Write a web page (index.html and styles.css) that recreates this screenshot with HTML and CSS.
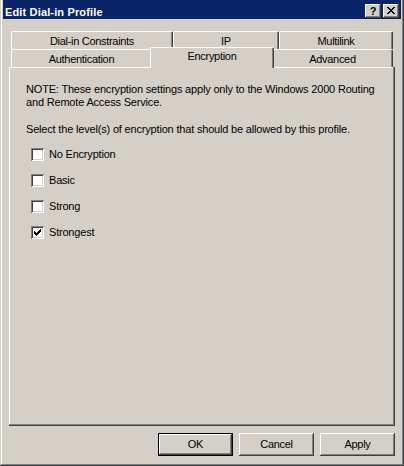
FILE: index.html
```html
<!DOCTYPE html>
<html>
<head>
<meta charset="utf-8">
<title>Edit Dial-in Profile</title>
<link rel="stylesheet" href="styles.css">
</head>
<body>
<div class="window">
  <div class="titlebar">
    <span class="title">Edit Dial-in Profile</span>
    <span class="cap-btn help">?</span>
    <span class="cap-btn close">
      <svg width="8" height="7" viewBox="0 0 8 7" shape-rendering="crispEdges">
        <path d="M0 0h2v1H0zM6 0h2v1H6zM1 1h2v1H1zM5 1h2v1H5zM2 2h4v1H2zM3 3h2v1H3zM2 4h4v1H2zM1 5h2v1H1zM5 5h2v1H5zM0 6h2v1H0zM6 6h2v1H6z" fill="#000"/>
      </svg>
    </span>
  </div>

  <div class="tabctl">
    <div class="tabrow">
      <div class="tab t-dial">Dial-in Constraints</div>
      <div class="tab t-ip">IP</div>
      <div class="tab t-multi">Multilink</div>
    </div>
    <div class="tabrow">
      <div class="tab t-auth">Authentication</div>
      <div class="tab t-enc selected">Encryption</div>
      <div class="tab t-adv">Advanced</div>
    </div>
    <div class="panel">
      <p class="note">NOTE: These encryption settings apply only to the Windows 2000 Routing<br>and Remote Access Service.</p>
      <p class="select">Select the level(s) of encryption that should be allowed by this profile.</p>
      <div class="checks">
        <label class="check"><span class="box"></span><span class="lbl">No Encryption</span></label>
        <label class="check"><span class="box"></span><span class="lbl">Basic</span></label>
        <label class="check"><span class="box"></span><span class="lbl">Strong</span></label>
        <label class="check"><span class="box"><svg width="7" height="7" viewBox="0 0 7 7" shape-rendering="crispEdges"><path d="M6 0h1v1H6zM5 1h2v1H5zM0 2h1v1H0zM4 2h3v1H4zM0 3h2v1H0zM3 3h3v1H3zM0 4h5v1H0zM1 5h3v1H1zM2 6h1v1H2z" fill="#000"/></svg></span><span class="lbl">Strongest</span></label>
      </div>
    </div>
  </div>

  <div class="buttons">
    <div class="btn default">OK</div>
    <div class="btn">Cancel</div>
    <div class="btn">Apply</div>
  </div>
</div>
</body>
</html>
```

FILE: styles.css
```css
* { box-sizing: border-box; }

html, body {
  margin: 0;
  padding: 0;
  background: #d4d0c8;
}

body {
  width: 404px;
  height: 466px;
  overflow: hidden;
  font-family: "Liberation Sans", Arial, sans-serif;
  font-size: 11px;
  color: #000;
}

.window {
  width: 404px;
  height: 466px;
  padding: 0 3px 3px 3px;
  background: #d4d0c8;
  box-shadow:
    inset -1px -1px 0 #404040,
    inset 1px 0 0 #d4d0c8,
    inset -2px -2px 0 #808080,
    inset 2px 0 0 #ffffff;
}

/* Title bar */
.titlebar {
  height: 19px;
  background: #0a246a;
  display: flex;
  align-items: flex-start;
  padding: 4px 2px 0 2px;
}

.title {
  flex: 1;
  margin-top: 2px;
  color: #fff;
  font-weight: bold;
  font-size: 11px;
  line-height: 13px;
  letter-spacing: 0.15px;
  white-space: nowrap;
}

.cap-btn {
  width: 16px;
  height: 14px;
  background: #d4d0c8;
  box-shadow:
    inset -1px -1px 0 #404040,
    inset 1px 1px 0 #ffffff,
    inset -2px -2px 0 #808080;
  display: flex;
  align-items: center;
  justify-content: center;
}

.help {
  margin-right: 2px;
  font-weight: bold;
  font-size: 11px;
  line-height: 14px;
  padding-bottom: 1px;
}

.close svg {
  display: block;
  margin-top: -1px;
}

/* Tab control */
.tabctl {
  margin: 12px 6px 0 6px;
}

.tabrow {
  display: flex;
  height: 18px;
  padding: 0 2px;
}

.tab {
  height: 18px;
  background: #d4d0c8;
  border-left: 1px solid #ffffff;
  border-top: 1px solid #ffffff;
  border-right: 1px solid #404040;
  border-radius: 2px 2px 0 0;
  box-shadow: inset -1px 0 0 #808080;
  text-align: center;
  padding-top: 1px;
  line-height: 17px;
  letter-spacing: -0.3px;
  white-space: nowrap;
  flex: none;
}

.t-dial { width: 162px; }
.t-ip { width: 106px; }
.t-multi { width: 114px; }
.t-auth { width: 141px; }
.t-enc { width: 124px; }
.t-adv { width: 121px; }

.tab.selected {
  position: relative;
  z-index: 2;
  height: 21px;
  margin: -2px -2px 0 -2px;
  padding-top: 0;
}

.panel {
  height: 359px;
  background: #d4d0c8;
  box-shadow:
    inset -1px -1px 0 #404040,
    inset -2px -2px 0 #808080,
    inset 1px 1px 0 #ffffff;
  padding: 16px 17px 0 17px;
}

.panel p {
  margin: 0;
  line-height: 13px;
  letter-spacing: -0.18px;
  white-space: nowrap;
}

.panel .select {
  margin-top: 14px;
}

.checks {
  margin-top: 12px;
  padding-left: 5px;
  display: flex;
  flex-direction: column;
  gap: 13px;
}

.check {
  display: flex;
  align-items: flex-start;
  height: 13px;
}

.box {
  width: 13px;
  height: 13px;
  background: #ffffff;
  padding: 3px;
  box-shadow:
    inset 1px 1px 0 #808080,
    inset -1px -1px 0 #ffffff,
    inset 2px 2px 0 #404040,
    inset -2px -2px 0 #d4d0c8;
}

.box svg { display: block; }

.lbl {
  margin-left: 5px;
  line-height: 13px;
  letter-spacing: -0.2px;
  white-space: nowrap;
}

/* Buttons */
.buttons {
  display: flex;
  justify-content: flex-end;
  gap: 6px;
  margin: 7px 6px 0 6px;
}

.btn {
  width: 75px;
  height: 23px;
  line-height: 23px;
  text-align: center;
  background: #d4d0c8;
  letter-spacing: -0.3px;
  box-shadow:
    inset -1px -1px 0 #404040,
    inset 1px 1px 0 #ffffff,
    inset -2px -2px 0 #808080;
}

.btn.default {
  box-shadow:
    inset 0 0 0 1px #000000,
    inset -2px -2px 0 #404040,
    inset 2px 2px 0 #ffffff,
    inset -3px -3px 0 #808080;
}
```
